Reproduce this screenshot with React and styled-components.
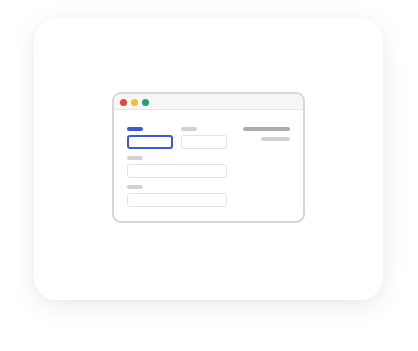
import React from "react";
import styled, { createGlobalStyle } from "styled-components";

const Global = createGlobalStyle`
  html, body { margin: 0; padding: 0; background: #ffffff; font-family: "Liberation Sans", Arial, sans-serif; }
`;

const Page = styled.div`
  width: 418px;
  height: 351px;
  box-sizing: border-box;
  padding: 18px 35px 51px 34px;
  display: flex;
`;

const Card = styled.div`
  flex: 1;
  background: #ffffff;
  border-radius: 22px;
  box-shadow: 0 6px 28px rgba(0, 0, 0, 0.08), 0 1px 4px rgba(0, 0, 0, 0.03);
  display: flex;
  align-items: center;
  justify-content: center;
  padding-bottom: 3px;
`;

const Window = styled.div`
  width: 193px;
  height: 131px;
  box-sizing: border-box;
  border: 2px solid #d6d6d6;
  border-radius: 9px;
  overflow: hidden;
  display: flex;
  flex-direction: column;
  background: #fff;
`;

const TitleBar = styled.div`
  height: 16px;
  flex: none;
  background: #f6f6f6;
  border-bottom: 1px solid #e6e6e6;
  display: flex;
  align-items: center;
  gap: 4px;
  padding-left: 6px;
  box-sizing: border-box;
  padding-top: 1px;
`;

const Dot = styled.span`
  width: 7px;
  height: 7px;
  border-radius: 50%;
  background: ${(p) => p.$c};
`;

const Body = styled.div`
  flex: 1;
  display: flex;
  align-items: flex-start;
  justify-content: space-between;
  padding: 17px 13px 0 13px;
`;

const Form = styled.div`
  width: 100px;
  display: flex;
  flex-direction: column;
  gap: 7px;
`;

const Row = styled.div`
  display: flex;
  gap: 8px;
`;

const Field = styled.div`
  width: ${(p) => p.$w || 100}px;
  display: flex;
  flex-direction: column;
  gap: 4px;
`;

const Label = styled.div`
  width: 16px;
  height: 4px;
  border-radius: 2px;
  background: ${(p) => (p.$active ? "#3a5ad9" : "#d2d2d2")};
`;

const Input = styled.div`
  height: 14px;
  box-sizing: border-box;
  border-radius: 3px;
  border: ${(p) => (p.$active ? "2px solid #3a5ad9" : "1.5px solid #e3e3e3")};
`;

const Side = styled.div`
  display: flex;
  flex-direction: column;
  align-items: flex-end;
  gap: 6px;
`;

const Line = styled.div`
  width: ${(p) => p.$w}px;
  height: 4px;
  border-radius: 2px;
  background: ${(p) => p.$c};
`;

export default function App() {
  return (
    <>
      <Global />
      <Page>
        <Card>
          <Window>
            <TitleBar>
              <Dot $c="#e0453f" />
              <Dot $c="#f5c12e" />
              <Dot $c="#1ea46c" />
            </TitleBar>
            <Body>
              <Form>
                <Row>
                  <Field $w={46}>
                    <Label $active />
                    <Input $active />
                  </Field>
                  <Field $w={46}>
                    <Label />
                    <Input />
                  </Field>
                </Row>
                <Field>
                  <Label />
                  <Input />
                </Field>
                <Field>
                  <Label />
                  <Input />
                </Field>
              </Form>
              <Side>
                <Line $w={47} $c="#ababab" />
                <Line $w={29} $c="#d2d2d2" />
              </Side>
            </Body>
          </Window>
        </Card>
      </Page>
    </>
  );
}
